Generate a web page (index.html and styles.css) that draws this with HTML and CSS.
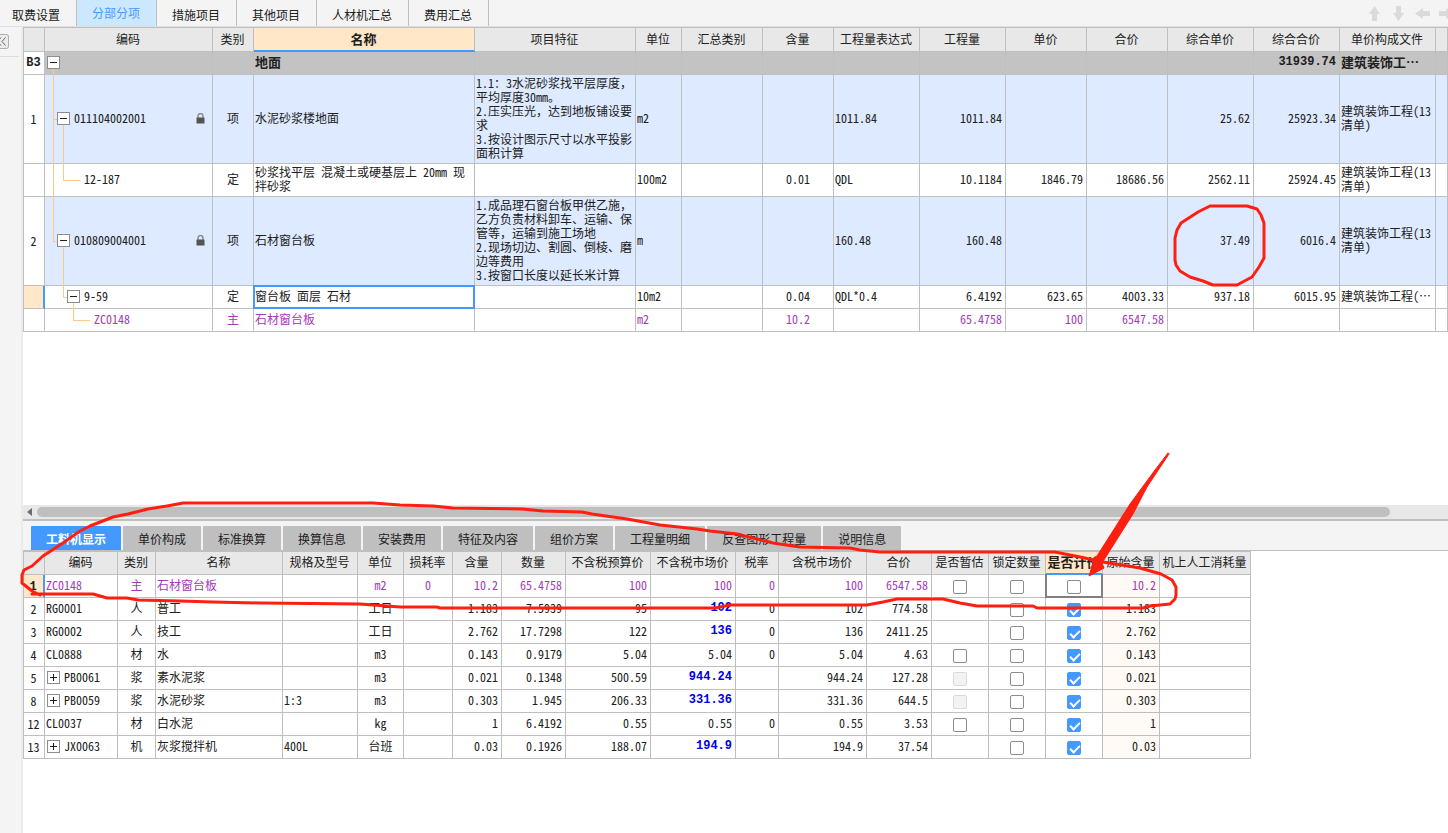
FILE: index.html
```html
<!DOCTYPE html>
<html lang="zh-CN">
<head>
<meta charset="utf-8">
<title>分部分项</title>
<link rel="stylesheet" href="styles.css">
</head>
<body>
<nav class="topbar">
  <button class="toptab">取费设置</button>
  <button class="toptab active">分部分项</button>
  <button class="toptab">措施项目</button>
  <button class="toptab">其他项目</button>
  <button class="toptab">人材机汇总</button>
  <button class="toptab">费用汇总</button>
  <div class="moves">
    <button class="move" aria-label="上移"><svg width="15" height="15" viewBox="0 0 15 15"><path d="M7.5 0 13 8H10V15H5V8H2Z"/></svg></button>
    <button class="move" aria-label="下移"><svg width="15" height="15" viewBox="0 0 15 15"><path d="M7.5 15 13 7H10V0H5V7H2Z"/></svg></button>
    <button class="move" aria-label="左移"><svg width="15" height="15" viewBox="0 0 15 15"><path d="M0 7.5 8 2V5H15V10H8V13Z"/></svg></button>
    <button class="move" aria-label="右移"><svg width="15" height="15" viewBox="0 0 15 15"><path d="M15 7.5 7 2V5H0V10H7V13Z"/></svg></button>
  </div>
</nav>
<div class="body">
  <aside class="rail"><button class="fold" aria-label="展开"><svg width="9" height="9" viewBox="0 0 9 9"><path d="M4 0.5 0.5 4.5 4 8.5M8.5 0.5 5 4.5 8.5 8.5"/></svg></button></aside>
  <main class="work">
    <section class="upper">
      <div class="sheet">
      <table class="grid bill">
        <colgroup><col class="w22"><col class="w168"><col class="w41"><col class="w221"><col class="w161"><col class="w46"><col class="w81"><col class="w71"><col class="w86"><col class="w86"><col class="w81"><col class="w81"><col class="w86"><col class="w86"><col class="w96"><col></colgroup>
        <thead><tr><th></th><th>编码</th><th>类别</th><th class="current">名称</th><th>项目特征</th><th>单位</th><th>汇总类别</th><th>含量</th><th>工程量表达式</th><th>工程量</th><th>单价</th><th>合价</th><th>综合单价</th><th>综合合价</th><th>单价构成文件</th><th></th></tr></thead>
        <tbody>
          <tr class="group"><td class="no">B3</td><td class="code"><i class="v a bottom"></i><div class="tree l0"><button class="box" aria-label="折叠"></button></div></td><td></td><td>地面</td><td></td><td></td><td></td><td></td><td></td><td></td><td></td><td></td><td></td><td class="r num">31939.74</td><td>建筑装饰工…</td><td></td></tr>
          <tr class="item tall"><td class="no">1</td><td class="code"><i class="v a full"></i><i class="h a"></i><i class="v b bottom"></i><div class="tree l1"><button class="box" aria-label="折叠"></button><span>011104002001</span><svg class="lock" width="9" height="11" viewBox="0 0 9 11"><path d="M2 5V3a2.5 2.5 0 0 1 5 0V5" fill="none" stroke="#888" stroke-width="1.4"/><rect x="0.5" y="4.5" width="8" height="6" rx="0.5" fill="#555"/></svg></div></td><td class="c">项</td><td>水泥砂浆楼地面</td><td>1.1：3水泥砂浆找平层厚度，<br>平均厚度30mm。<br>2.压实压光，达到地板铺设要<br>求<br>3.按设计图示尺寸以水平投影<br>面积计算</td><td>m2</td><td></td><td></td><td>1011.84</td><td class="r">1011.84</td><td></td><td></td><td class="r">25.62</td><td class="r">25923.34</td><td>建筑装饰工程(13<br>清单)</td><td></td></tr>
          <tr class="double"><td class="no"></td><td class="code"><i class="v a full"></i><i class="v b top"></i><i class="h b long"></i><div class="tree l1 leaf"><span>12-187</span></div></td><td class="c">定</td><td>砂浆找平层 混凝土或硬基层上 20mm 现<br>拌砂浆</td><td></td><td>100m2</td><td></td><td class="c">0.01</td><td>QDL</td><td class="r">10.1184</td><td class="r">1846.79</td><td class="r">18686.56</td><td class="r">2562.11</td><td class="r">25924.45</td><td>建筑装饰工程(13<br>清单)</td><td></td></tr>
          <tr class="item tall"><td class="no">2</td><td class="code"><i class="v a top"></i><i class="h a"></i><i class="v b bottom"></i><div class="tree l1"><button class="box" aria-label="折叠"></button><span>010809004001</span><svg class="lock" width="9" height="11" viewBox="0 0 9 11"><path d="M2 5V3a2.5 2.5 0 0 1 5 0V5" fill="none" stroke="#888" stroke-width="1.4"/><rect x="0.5" y="4.5" width="8" height="6" rx="0.5" fill="#555"/></svg></div></td><td class="c">项</td><td>石材窗台板</td><td>1.成品理石窗台板甲供乙施，<br>乙方负责材料卸车、运输、保<br>管等，运输到施工场地<br>2.现场切边、割圆、倒棱、磨<br>边等费用<br>3.按窗口长度以延长米计算</td><td>m</td><td></td><td></td><td>160.48</td><td class="r">160.48</td><td></td><td></td><td class="r">37.49</td><td class="r">6016.4</td><td>建筑装饰工程(13<br>清单)</td><td></td></tr>
          <tr><td class="no here"></td><td class="code"><i class="v b top"></i><i class="h b"></i><i class="v d bottom"></i><div class="tree l2"><button class="box" aria-label="折叠"></button><span>9-59</span></div></td><td class="c">定</td><td class="editing">窗台板 面层 石材</td><td></td><td>10m2</td><td></td><td class="c">0.04</td><td>QDL*0.4</td><td class="r">6.4192</td><td class="r">623.65</td><td class="r">4003.33</td><td class="r">937.18</td><td class="r">6015.95</td><td>建筑装饰工程(…</td><td></td></tr>
          <tr class="main-mat"><td class="no"></td><td class="code"><i class="v d top"></i><i class="h d long"></i><div class="tree l2 leaf"><span>ZC0148</span></div></td><td class="c">主</td><td>石材窗台板</td><td></td><td>m2</td><td></td><td class="c">10.2</td><td></td><td class="r">65.4758</td><td class="r">100</td><td class="r">6547.58</td><td></td><td></td><td></td><td></td></tr>
        </tbody>
      </table>
      </div>
      <div class="scroll"><button class="scroll-left" aria-label="向左滚动"></button><div class="thumb"></div></div>
    </section>
    <section class="lower">
      <div class="tabs">
        <button class="tab active">工料机显示</button><button class="tab">单价构成</button><button class="tab">标准换算</button><button class="tab">换算信息</button><button class="tab">安装费用</button><button class="tab">特征及内容</button><button class="tab">组价方案</button><button class="tab">工程量明细</button><button class="tab">反查图形工程量</button><button class="tab">说明信息</button>
      </div>
      <table class="grid res">
        <colgroup><col class="w22"><col class="w73"><col class="w38"><col class="w127"><col class="w75"><col class="w46"><col class="w49"><col class="w49"><col class="w64"><col class="w85"><col class="w85"><col class="w43"><col class="w88"><col class="w65"><col class="w57"><col class="w57"><col class="w57"><col class="w57"><col class="w91"></colgroup>
        <thead><tr><th></th><th>编码</th><th>类别</th><th>名称</th><th>规格及型号</th><th>单位</th><th>损耗率</th><th>含量</th><th>数量</th><th>不含税预算价</th><th>不含税市场价</th><th>税率</th><th>含税市场价</th><th>合价</th><th>是否暂估</th><th>锁定数量</th><th class="current">是否计价</th><th>原始含量</th><th>机上人工消耗量</th></tr></thead>
        <tbody>
          <tr class="main-mat"><td class="no here"><b>1</b></td><td>ZC0148</td><td class="c">主</td><td>石材窗台板</td><td></td><td class="c">m2</td><td class="c">0</td><td class="r">10.2</td><td class="r">65.4758</td><td class="r">100</td><td class="r">100</td><td class="r">0</td><td class="r">100</td><td class="r">6547.58</td><td class="c"><input type="checkbox" aria-label="是否暂估"></td><td class="c"><input type="checkbox" aria-label="锁定数量"></td><td class="c focus"><input type="checkbox" aria-label="是否计价"></td><td class="r orig">10.2</td><td></td></tr>
          <tr><td class="no">2</td><td>RG0001</td><td class="c">人</td><td>普工</td><td></td><td class="c">工日</td><td></td><td class="r">1.183</td><td class="r">7.5939</td><td class="r">95</td><td class="r price">102</td><td class="r">0</td><td class="r">102</td><td class="r">774.58</td><td></td><td class="c"><input type="checkbox" aria-label="锁定数量"></td><td class="c"><input type="checkbox" aria-label="是否计价" checked></td><td class="r orig">1.183</td><td></td></tr>
          <tr><td class="no">3</td><td>RG0002</td><td class="c">人</td><td>技工</td><td></td><td class="c">工日</td><td></td><td class="r">2.762</td><td class="r">17.7298</td><td class="r">122</td><td class="r price">136</td><td class="r">0</td><td class="r">136</td><td class="r">2411.25</td><td></td><td class="c"><input type="checkbox" aria-label="锁定数量"></td><td class="c"><input type="checkbox" aria-label="是否计价" checked></td><td class="r orig">2.762</td><td></td></tr>
          <tr><td class="no">4</td><td>CL0888</td><td class="c">材</td><td>水</td><td></td><td class="c">m3</td><td></td><td class="r">0.143</td><td class="r">0.9179</td><td class="r">5.04</td><td class="r">5.04</td><td class="r">0</td><td class="r">5.04</td><td class="r">4.63</td><td class="c"><input type="checkbox" aria-label="是否暂估"></td><td class="c"><input type="checkbox" aria-label="锁定数量"></td><td class="c"><input type="checkbox" aria-label="是否计价" checked></td><td class="r orig">0.143</td><td></td></tr>
          <tr><td class="no">5</td><td class="code"><div class="tree l0"><button class="box plus" aria-label="展开"></button><span>PB0061</span></div></td><td class="c">浆</td><td>素水泥浆</td><td></td><td class="c">m3</td><td></td><td class="r">0.021</td><td class="r">0.1348</td><td class="r">500.59</td><td class="r price">944.24</td><td></td><td class="r">944.24</td><td class="r">127.28</td><td class="c"><input type="checkbox" aria-label="是否暂估" disabled></td><td class="c"><input type="checkbox" aria-label="锁定数量"></td><td class="c"><input type="checkbox" aria-label="是否计价" checked></td><td class="r orig">0.021</td><td></td></tr>
          <tr><td class="no">8</td><td class="code"><div class="tree l0"><button class="box plus" aria-label="展开"></button><span>PB0059</span></div></td><td class="c">浆</td><td>水泥砂浆</td><td>1:3</td><td class="c">m3</td><td></td><td class="r">0.303</td><td class="r">1.945</td><td class="r">206.33</td><td class="r price">331.36</td><td></td><td class="r">331.36</td><td class="r">644.5</td><td class="c"><input type="checkbox" aria-label="是否暂估" disabled></td><td class="c"><input type="checkbox" aria-label="锁定数量"></td><td class="c"><input type="checkbox" aria-label="是否计价" checked></td><td class="r orig">0.303</td><td></td></tr>
          <tr><td class="no">12</td><td>CL0037</td><td class="c">材</td><td>白水泥</td><td></td><td class="c">kg</td><td></td><td class="r">1</td><td class="r">6.4192</td><td class="r">0.55</td><td class="r">0.55</td><td class="r">0</td><td class="r">0.55</td><td class="r">3.53</td><td class="c"><input type="checkbox" aria-label="是否暂估"></td><td class="c"><input type="checkbox" aria-label="锁定数量"></td><td class="c"><input type="checkbox" aria-label="是否计价" checked></td><td class="r orig">1</td><td></td></tr>
          <tr><td class="no">13</td><td class="code"><div class="tree l0"><button class="box plus" aria-label="展开"></button><span>JX0063</span></div></td><td class="c">机</td><td>灰浆搅拌机</td><td>400L</td><td class="c">台班</td><td></td><td class="r">0.03</td><td class="r">0.1926</td><td class="r">188.07</td><td class="r price">194.9</td><td></td><td class="r">194.9</td><td class="r">37.54</td><td></td><td class="c"><input type="checkbox" aria-label="锁定数量"></td><td class="c"><input type="checkbox" aria-label="是否计价" checked></td><td class="r orig">0.03</td><td></td></tr>
        </tbody>
      </table>
    </section>
  </main>
</div>
<svg class="marks" width="1448" height="833" viewBox="0 0 1448 833" aria-hidden="true">
  <path d="M1210 206H1247L1257 209 1261 215 1264 223V258L1259 267 1252 277 1237 285H1213L1203 281 1190 277 1180 271 1176 265 1175 260V238L1177 230 1181 223 1198 212Z"/>
  <path d="M32 594H93L107 598H127L138 600 180 601 213 602 260 603 360 604 400 607 437 607 440 608H715L730 605H800L867 605 883 602 897 599H943L960 603 977 606H1033L1037 608H1143L1150 606 1160 605 1170 604 1175 599 1176 595V587L1172 580 1161 574 1140 568 1103 562 1080 557 1055 552H880L860 550 850 548 800 547 773 543 737 534 710 531 697 529 660 525 627 519 592 514 582 512 543 511 522 509 453 508 433 506 400 505 373 503H183L167 506 148 509 128 514 113 517 90 526 80 531 63 543 43 556 32 566 24 570 22 575V583L32 591 40 595"/>
  <path class="arrow" d="M1168 453 1155 470 1130 504 1097 556 1095 557 1089 576 1104 568 1102 563 1133 514 1147 487 1169 454Z"/>
</svg>
</body>
</html>
```
FILE: styles.css
```css
* { box-sizing: border-box; }
body {
  margin: 0;
  height: 100vh;
  display: flex;
  flex-direction: column;
  overflow: hidden;
  background: #f4f4f4;
  color: #202020;
  font: 12px/14px "Noto Sans Mono CJK SC", "Noto Sans CJK SC", sans-serif;
}
button {
  margin: 0;
  padding: 0;
  border: 0;
  background: none;
  color: inherit;
  font: inherit;
}
.topbar { display: flex; height: 27px; flex: none; border-bottom: 1px solid #e0e0e0; overflow: hidden; }
.toptab { padding: 3px 16px 0 15px; border-right: 1px solid #bfbfbf; white-space: nowrap; }
.toptab:first-child { padding-left: 12px; }
.toptab.active { background: #cce8ff; color: #4499ff; padding-top: 0; }
.moves { display: flex; gap: 9px; margin-left: auto; margin-right: -6px; align-items: center; }
.move { display: flex; }
.move svg { fill: #dadada; }

.body { display: flex; flex: 1; min-height: 0; }
.rail { position: relative; flex: none; width: 23px; border-right: 2px solid #ebebeb; padding-top: 7px; }
.rail::after { content: ""; display: block; margin-top: 7px; width: 19px; border-top: 1px solid #dcdcdc; }
.fold {
  display: flex;
  align-items: center;
  width: 9px;
  height: 15px;
  border: 1px solid #b0b0b0;
  border-left: 0;
  border-radius: 0 3px 3px 0;
  background: #ececec;
}
.fold svg { fill: none; stroke: #666; flex: none; margin-left: -3px; }
.work { display: flex; flex-direction: column; flex: 1; min-width: 0; }
.upper { display: flex; flex-direction: column; flex: 494 1 0; min-height: 0; background: #fff; }
.sheet { flex: 1; min-height: 0; overflow: hidden; }
.lower { flex: 312 1 0; min-height: 0; background: #fff; }

.grid { table-layout: fixed; border-collapse: separate; border-spacing: 0; border-top: 1px solid #bfbfbf; }
.bill { width: 100%; }
.res { width: 1px; }
.grid th, .grid td {
  position: relative;
  height: 23px;
  padding: 0 3px 2px 1px;
  border-right: 1px solid #bfbfbf;
  border-bottom: 1px solid #bfbfbf;
  text-align: left;
  vertical-align: middle;
  font-weight: 400;
  white-space: nowrap;
}
.grid th { background: #e8e8e8; padding: 0 1px 2px 0; text-align: center; }
.bill th { height: 24px; }
.grid th:first-child, .grid td:first-child { border-left: 1px solid #bfbfbf; }
.grid th.current { background: #ffe7c7; padding: 0 1px 1px 0; font-weight: 700; font-size: 13px; border-bottom: 2px solid #4499ff; }
.grid td.c { padding-right: 1px; text-align: center; }
.grid td.r { text-align: right; }
.grid td.no { background: #fff; padding: 0 1px 0 0; text-align: center; }
.grid td.here { background: #ffe7c7; border-right: 2px solid #4499ff; }
.grid .group td { background: #c3c3c3; font-weight: 700; font-size: 13px; }
.grid .group td.no { background: #fff; }
.grid .group td.no, .grid .group td.num, .grid td.price, .here b {
  font: 700 12px/14px "Liberation Mono", monospace;
}
.grid td.price { color: #0000e6; }
.item td { background: #deeaff; }
.grid .tall td { height: 89px; }
.grid .double td { height: 33px; }
.main-mat td { color: #a33bb5; }
.grid .main-mat td.no { color: #202020; }
.grid td.orig { background: #fffaf5; }
.editing::after, .focus::after {
  content: "";
  position: absolute;
  inset: -1px;
  border: 2px solid #4499ff;
}
.focus::after { border-color: #808080; border-top: 0; pointer-events: none; }

.tree { position: relative; display: flex; align-items: center; gap: 4px; padding-left: 1px; }
.tree.l1 { padding-left: 11px; }
.tree.l2 { padding-left: 21px; }
.tree.leaf { padding-left: 38px; }
.tree.l2.leaf { padding-left: 48px; }
.box {
  position: relative;
  flex: none;
  width: 13px;
  height: 13px;
  border: 1px solid #8c8c8c;
  background: #fff;
}
.box::before, .plus::after { content: ""; position: absolute; left: 2px; top: 5px; width: 7px; height: 1px; background: #202020; }
.plus::after { left: 5px; top: 2px; width: 1px; height: 7px; }
.lock { margin-left: auto; margin-right: 4px; }
.v, .h { position: absolute; background: #fbc98b; }
.v { width: 1px; }
.h { top: 50%; height: 1px; width: 6px; }
.h.long { width: 17px; }
.a { left: 8px; }
.b { left: 18px; }
.d { left: 28px; }
.full { top: 0; bottom: -1px; }
.top { top: 0; height: 50%; }
.bottom { top: 50%; bottom: -1px; }

.scroll { display: flex; flex: none; align-items: center; height: 16px; padding: 0 58px 0 4px; background: #e8e8e8; border-bottom: 2px solid #bfbfbf; }
.scroll-left { border: 4px solid transparent; border-right: 5px solid #6b6b78; border-left: 0; margin-right: 5px; }
.thumb { flex: 1; height: 10px; border-radius: 5px; background: #bfbfbf; }

.tabs { display: flex; gap: 2px; height: 30px; padding: 5px 8px 0; background: #f4f4f4; border-bottom: 1px solid #bfbfbf; }
.tab { padding: 1px 15px 0; background: #bfbfbf; white-space: nowrap; border-radius: 1px 1px 0 0; }
.tab.active { background: #4499ff; color: #fff; font-weight: 700; }

input[type="checkbox"] {
  appearance: none;
  display: block;
  position: relative;
  width: 14px;
  height: 14px;
  margin: 3px auto 0;
  border: 1px solid #8c8c8c;
  border-radius: 2px;
  background: #fff;
}
input[type="checkbox"]:checked { background: #4499ff; border-color: #4499ff; }
input[type="checkbox"]:checked::after {
  content: "";
  position: absolute;
  left: 4px;
  top: 1px;
  width: 4px;
  height: 8px;
  border: solid #fff;
  border-width: 0 2px 2px 0;
  transform: rotate(45deg);
}
input[type="checkbox"]:disabled { background: #f2f2f2; border-color: #dadada; }

.marks { position: absolute; left: 0; top: 0; pointer-events: none; }
.marks path { fill: none; stroke: #ff1f10; stroke-width: 3; stroke-linejoin: round; stroke-linecap: round; }
.marks .arrow { fill: #ff1f10; stroke-width: 1; }

.w22 { width: 22px; }
.w38 { width: 38px; }
.w41 { width: 41px; }
.w43 { width: 43px; }
.w46 { width: 46px; }
.w49 { width: 49px; }
.w57 { width: 57px; }
.w64 { width: 64px; }
.w65 { width: 65px; }
.w71 { width: 71px; }
.w73 { width: 73px; }
.w75 { width: 75px; }
.w81 { width: 81px; }
.w85 { width: 85px; }
.w86 { width: 86px; }
.w88 { width: 88px; }
.w91 { width: 91px; }
.w96 { width: 96px; }
.w127 { width: 127px; }
.w161 { width: 161px; }
.w168 { width: 168px; }
.w221 { width: 221px; }
```
